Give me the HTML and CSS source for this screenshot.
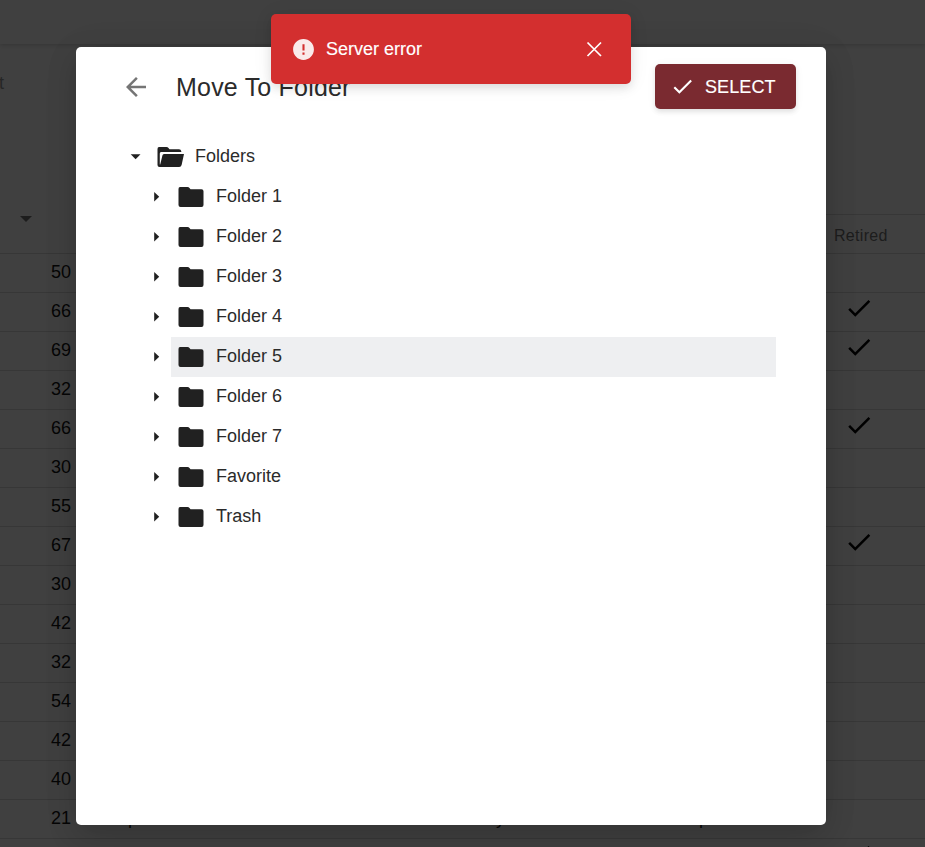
FILE: index.html
```html
<!DOCTYPE html>
<html lang="en">
<head>
<meta charset="utf-8">
<title>Move To Folder</title>
<link rel="stylesheet" href="styles.css">
</head>
<body>
<svg class="defs" aria-hidden="true">
  <symbol id="check" viewBox="0 0 24 24"><path d="M9 16.17 4.83 12l-1.42 1.41L9 19 21 7l-1.41-1.41z"/></symbol>
  <symbol id="folder" viewBox="0 0 26 20"><path d="M2 0h7.500q1.300 0 2 1l1 1.300H23.500q2 0 2 2V18q0 2-2 2H2.500q-2 0-2-2V2Q.5 0 2 0z"/></symbol>
  <symbol id="right" viewBox="0 0 6 12"><path d="M.2 1 5.200 5.700 .2 10.400z"/></symbol>
</svg>
<div class="page">
  <div class="topbar"></div>
  <div class="filters"><span class="filter-label">t</span></div>
  <div class="table-head">
    <svg class="sort" viewBox="0 0 12 6"><path d="M0 0h12L6 6z"/></svg>
    <div class="retired-head">Retired</div>
  </div>
  <div class="rows" id="rows"></div>
</div>
<div class="backdrop">
  <section class="dialog">
    <header class="dialog-head">
      <svg class="back" viewBox="0 0 24 24"><path d="M20 11H7.830l5.590-5.590L12 4l-8 8 8 8 1.410-1.410L7.830 13H20v-2z"/></svg>
      <h1>Move To Folder</h1>
      <button class="select"><svg viewBox="0 0 24 24"><use href="#check"/></svg><span>SELECT</span></button>
    </header>
    <div class="tree">
      <div class="root">
        <svg class="down" viewBox="0 0 12 6"><path d="M.7.3h9.800L5.600 5.200z"/></svg>
        <svg class="open" viewBox="0 0 27 20"><path d="M2 0h7.500q1.300 0 2 1l1 1.300H22q2 0 2.300 2V5H4Q2.800 5 2.800 6.500V17.500H3.200L5.400 8.500Q5.700 7 7 7H27L24.600 18q-.5 2-2.500 2H2.500Q.5 20 .5 18V2Q.5 0 2 0z"/></svg>
        <span>Folders</span>
      </div>
      <div id="tree"></div>
    </div>
  </section>
</div>
<div class="toast">
  <svg class="alert" viewBox="0 0 24 24"><path d="M12 2C6.480 2 2 6.480 2 12s4.480 10 10 10 10-4.480 10-10S17.520 2 12 2zm1 15h-2v-2h2v2zm0-4h-2V7h2v6z"/></svg>
  <span>Server error</span>
  <svg class="close" viewBox="0 0 16 16"><path d="M1.500 1.500l13.500 13.500M15 1.500 1.500 15"/></svg>
</div>
<script src="app.js"></script>
</body>
</html>
```
FILE: styles.css
```css
* { box-sizing: border-box; }
body { margin: 0; height: 847px; overflow: hidden; background: #fff; color: #2b2b2b; font: 18px/24px "Liberation Sans", Arial, sans-serif; }
svg { display: block; flex: none; fill: currentColor; }
.defs { position: absolute; width: 0; height: 0; }
.page { height: 847px; overflow: hidden; }
.topbar { height: 44px; box-shadow: 0 1px 5px rgba(0,0,0,.2); }
.filters { height: 135px; padding-top: 27px; color: #999; }
.filter-label { display: block; margin-left: -1px; }
.table-head { height: 75px; display: flex; align-items: flex-end; justify-content: space-between; border-bottom: 1px solid #dcdcdc; }
.sort { width: 12px; height: 6px; margin: 0 0 31px 20px; color: #757575; }
.retired-head { width: 99px; height: 39px; padding: 0 8px; border-top: 1px solid #dcdcdc; color: #757575; font-size: 16px; line-height: 41px; letter-spacing: .3px; }
.row { height: 39px; display: grid; grid-template-columns: 128px 368px 203px 148px 1fr; border-bottom: 1px solid #dcdcdc; line-height: 36px; color: #181818; }
.age { padding-left: 51px; }
.mark { width: 24px; height: 26px; margin-top: 1px; color: #000; }
.mark svg { width: 30px; height: 30px; margin: -1px 0 0 -3px; }
.backdrop { position: absolute; inset: 0; padding: 47px 99px 0 76px; background: rgba(0,0,0,.75); }
.dialog { width: 750px; height: 778px; padding: 17px 30px 0 45px; border-radius: 5px; background: #fff; box-shadow: 0 10px 30px rgba(0,0,0,.16), 0 4px 40px rgba(0,0,0,.06); }
.dialog-head { display: flex; align-items: center; height: 45px; }
.back { width: 30px; height: 30px; color: #757575; }
h1 { margin: 0 0 0 25px; flex: 1; font-size: 25px; line-height: 32px; font-weight: 400; letter-spacing: .2px; }
.select { display: flex; align-items: center; width: 141px; height: 45px; padding: 0 0 0 15px; border: 0; border-radius: 5px; background: #7a2a30; color: #fff; font: 18px/24px "Liberation Sans", Arial, sans-serif; letter-spacing: .1px; -webkit-text-stroke: .15px; box-shadow: 0 3px 5px rgba(0,0,0,.09), 0 1px 10px rgba(0,0,0,.05); }
.select svg { width: 25px; height: 25px; margin-right: 10px; }
.tree { padding: 28px 20px 0 0; }
.root { height: 40px; display: flex; align-items: center; padding-left: 9px; }
.root svg, .node svg { color: #212121; }
.root span, .label { position: relative; top: -1px; }
.down { width: 12px; height: 6px; margin-right: 15px; }
.open { width: 27px; height: 20px; margin-right: 11px; }
.node { height: 40px; display: flex; align-items: center; padding-left: 33px; }
.right { width: 6px; height: 12px; margin-right: 11px; }
.item { flex: 1; height: 40px; display: flex; align-items: center; padding-left: 7px; }
.item svg { width: 26px; height: 20px; margin-right: 12px; }
.item.active { background: #eeeff1; }
.toast { position: absolute; left: 271px; top: 14px; width: 360px; height: 70px; display: flex; align-items: center; padding: 0 29px 0 20px; border-radius: 5px; background: #d32f2f; color: #fff; -webkit-text-stroke: .15px; box-shadow: 0 4px 10px rgba(0,0,0,.1), 0 1px 20px rgba(0,0,0,.07); }
.toast span { flex: 1; }
.alert { width: 25px; height: 25px; margin-right: 10px; opacity: .9; }
.close { width: 16px; height: 16px; stroke: #fff; stroke-width: 1.7; }
```
FILE: app.js
```js
const people = [[50,0],[66,1],[69,1],[32,0],[66,1],[30,0],[55,0],[67,1],[30,0],[42,0],[32,0],[54,0],[42,0],[40,0],[21,0,"p","y","p"],["",1]];
document.getElementById("rows").innerHTML = people.map(([age, retired, a = "", b = "", c = ""]) =>
  `<div class="row"><span class="age">${age}</span><span>${a}</span><span>${b}</span><span>${c}</span><span class="mark">${retired ? '<svg viewBox="0 0 24 24"><use href="#check"/></svg>' : ""}</span></div>`).join("");
const folders = ["Folder 1", "Folder 2", "Folder 3", "Folder 4", "Folder 5", "Folder 6", "Folder 7", "Favorite", "Trash"];
document.getElementById("tree").innerHTML = folders.map(name =>
  `<div class="node"><svg class="right" viewBox="0 0 6 12"><use href="#right"/></svg><div class="item${name === "Folder 5" ? " active" : ""}"><svg viewBox="0 0 26 20"><use href="#folder"/></svg><span class="label">${name}</span></div></div>`).join("");
```
